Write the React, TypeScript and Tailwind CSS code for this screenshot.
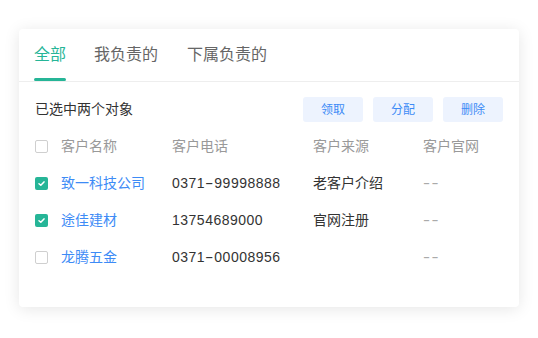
import React from "react";

function Check({ checked }: { checked: boolean }) {
  if (checked) {
    return (
      <span className="flex h-[13px] w-[13px] items-center justify-center rounded-[2px] bg-[#26b597]">
        <svg width="9" height="9" viewBox="0 0 9 9" fill="none">
          <path d="M2 4.7 L3.8 6.3 L7 2.9" stroke="white" strokeWidth="1.5" strokeLinecap="round" strokeLinejoin="round" />
        </svg>
      </span>
    );
  }
  return <span className="block h-[13px] w-[13px] rounded-[2px] border border-[#cfcfcf] bg-white" />;
}

function Phone({ value }: { value: string }) {
  const parts = value.split("-");
  if (parts.length === 1) return <>{value}</>;
  return (
    <>
      {parts[0]}
      <span className="mx-[2px] inline-block scale-x-[1.8]">-</span>
      {parts[1]}
    </>
  );
}

const rows = [
  { checked: true, name: "致一科技公司", phone: "0371-99998888", source: "老客户介绍", site: "--" },
  { checked: true, name: "途佳建材", phone: "13754689000", source: "官网注册", site: "--" },
  { checked: false, name: "龙腾五金", phone: "0371-00008956", source: "", site: "--" },
];

export default function App() {
  return (
    <div
      className="h-[338px] w-[538px] bg-white pl-[19px] pt-[29px]"
      style={{ fontFamily: '"Liberation Sans", "Noto Sans CJK SC", sans-serif' }}
    >
      <div className="h-[278px] w-[500px] rounded-[4px] bg-white shadow-[0_2px_16px_rgba(0,0,0,0.10)]">
        <div className="flex h-[53px] items-stretch border-b border-[#eeeeee] px-[15px]">
          <div className="relative mr-[28px] flex items-center text-[16px] text-[#26b597]">
            全部
            <span className="absolute bottom-0 left-0 h-[3px] w-[32px] rounded-full bg-[#26b597]" />
          </div>
          <div className="mr-[29px] flex items-center text-[16px] text-[#666666]">我负责的</div>
          <div className="flex items-center text-[16px] text-[#666666]">下属负责的</div>
        </div>
        <div className="flex items-center justify-between pl-[16px] pr-[16px] pt-[15px]">
          <span className="text-[14px] text-[#333333]">已选中两个对象</span>
          <div className="flex gap-[10px]">
            {["领取", "分配", "删除"].map((t) => (
              <button
                key={t}
                className="flex h-[25px] w-[60px] items-center justify-center rounded-[3px] bg-[#edf3fe] text-[12px] text-[#3d8bf6]"
              >
                {t}
              </button>
            ))}
          </div>
        </div>
        <div className="mt-[6px] pl-[16px] text-[14px]">
          <div className="flex h-[37px] items-center text-[#999999]">
            <div className="w-[26px]">
              <Check checked={false} />
            </div>
            <div className="w-[111px]">客户名称</div>
            <div className="w-[141px]">客户电话</div>
            <div className="w-[110px]">客户来源</div>
            <div>客户官网</div>
          </div>
          {rows.map((r) => (
            <div key={r.name} className="flex h-[37px] items-center">
              <div className="w-[26px]">
                <Check checked={r.checked} />
              </div>
              <div className="w-[111px] text-[#3d8bf6]">{r.name}</div>
              <div className="w-[141px] tracking-[0.5px] text-[#333333]">
                <Phone value={r.phone} />
              </div>
              <div className="w-[110px] text-[#333333]">{r.source}</div>
              <div className="inline-block origin-left scale-x-[1.5] tracking-[1px] text-[#aaaaaa]">{r.site}</div>
            </div>
          ))}
        </div>
      </div>
    </div>
  );
}
